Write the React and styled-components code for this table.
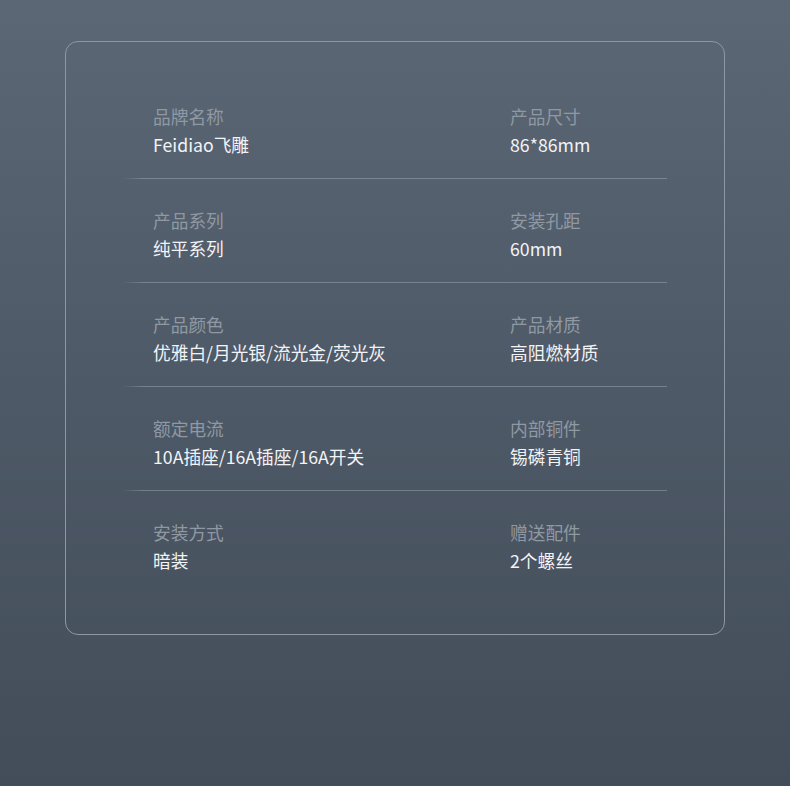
import React from 'react';
import styled, { createGlobalStyle } from 'styled-components';

const GlobalStyle = createGlobalStyle`
    html, body {
        margin: 0;
        padding: 0;
    }
    body {
        font-family: "Noto Sans CJK SC", "Noto Sans", sans-serif;
    }
`;

const Page = styled.div`
    width: 790px;
    height: 786px;
    box-sizing: border-box;
    padding: 41px 65px 0;
    background: linear-gradient(180deg, #5c6775 0%, #4e5967 50%, #434d59 100%);
    overflow: hidden;
`;

const Card = styled.div`
    box-sizing: border-box;
    width: 660px;
    height: 594px;
    border: 1.5px solid #8e98a3;
    border-radius: 13px;
    padding: 33px 57px 0 56px;
`;

const Row = styled.div`
    display: grid;
    grid-template-columns: 357px 1fr;
    padding: 27px 0 20px 31px;
`;

const Divider = styled.div`
    height: 1px;
    background: linear-gradient(
        90deg,
        rgba(160, 170, 180, 0) 0%,
        rgba(160, 170, 180, 0.5) 4%,
        rgba(160, 170, 180, 0.5) 100%
    );
`;

const Cell = styled.div`
    display: flex;
    flex-direction: column;
`;

const Label = styled.div`
    font-size: 17.7px;
    line-height: 28px;
    color: #8f99a4;
`;

const Value = styled.div`
    font-size: 17.7px;
    line-height: 28px;
    color: #f2f3f5;
`;

const rows = [
    [['品牌名称', 'Feidiao飞雕'], ['产品尺寸', '86*86mm']],
    [['产品系列', '纯平系列'], ['安装孔距', '60mm']],
    [['产品颜色', '优雅白/月光银/流光金/荧光灰'], ['产品材质', '高阻燃材质']],
    [['额定电流', '10A插座/16A插座/16A开关'], ['内部铜件', '锡磷青铜']],
    [['安装方式', '暗装'], ['赠送配件', '2个螺丝']],
];

const App = () => (
    <>
        <GlobalStyle />
        <Page>
            <Card>
                {rows.map((row, index) => (
                    <React.Fragment key={index}>
                        <Row>
                            {row.map(([label, value]) => (
                                <Cell key={label}>
                                    <Label>{label}</Label>
                                    <Value>{value}</Value>
                                </Cell>
                            ))}
                        </Row>
                        {index < rows.length - 1 && <Divider />}
                    </React.Fragment>
                ))}
            </Card>
        </Page>
    </>
);

export default App;
